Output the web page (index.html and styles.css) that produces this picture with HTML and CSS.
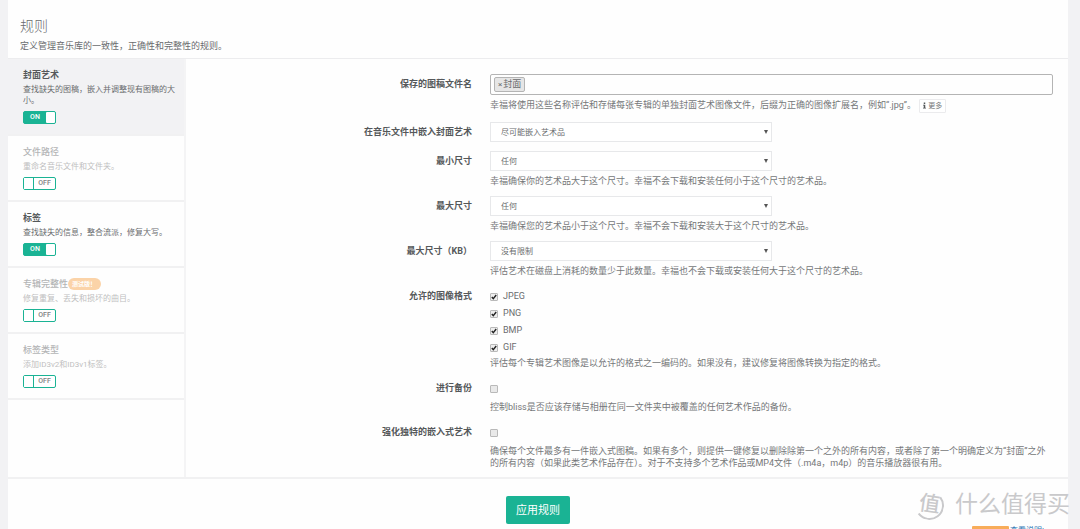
FILE: index.html
```html
<!DOCTYPE html>
<html lang="zh-CN">
<head>
<meta charset="utf-8">
<title>规则</title>
<link rel="stylesheet" href="styles.css">
</head>
<body>
<main class="card">
  <header class="card-header">
    <h1>规则</h1>
    <p>定义管理音乐库的一致性，正确性和完整性的规则。</p>
  </header>
  <div class="card-body">
    <nav class="rules">
      <section class="rule rule-active">
        <h2>封面艺术</h2>
        <p>查找缺失的图稿，嵌入并调整现有图稿的大小。</p>
        <button type="button" class="switch switch-on" role="switch" aria-checked="true" aria-label="封面艺术"><span class="switch-text">ON</span><span class="knob"></span></button>
      </section>
      <section class="rule rule-off">
        <h2>文件路径</h2>
        <p>重命名音乐文件和文件夹。</p>
        <button type="button" class="switch" role="switch" aria-checked="false" aria-label="文件路径"><span class="knob"></span><span class="switch-text">OFF</span></button>
      </section>
      <section class="rule">
        <h2>标签</h2>
        <p>查找缺失的信息，整合流派，修复大写。</p>
        <button type="button" class="switch switch-on" role="switch" aria-checked="true" aria-label="标签"><span class="switch-text">ON</span><span class="knob"></span></button>
      </section>
      <section class="rule rule-off">
        <h2>专辑完整性<span class="badge">测试版！</span></h2>
        <p>修复重复、丢失和损坏的曲目。</p>
        <button type="button" class="switch" role="switch" aria-checked="false" aria-label="专辑完整性"><span class="knob"></span><span class="switch-text">OFF</span></button>
      </section>
      <section class="rule rule-off">
        <h2>标签类型</h2>
        <p>添加ID3v2和ID3v1标签。</p>
        <button type="button" class="switch" role="switch" aria-checked="false" aria-label="标签类型"><span class="knob"></span><span class="switch-text">OFF</span></button>
      </section>
    </nav>
    <form class="settings" id="settings">
      <div class="row">
        <label class="name" for="filenames">保存的图稿文件名</label>
        <div class="field">
          <div class="tags">
            <span class="tag"><button type="button" class="tag-remove" aria-label="移除">×</button>封面</span>
            <input type="text" class="tag-input" id="filenames">
          </div>
          <p class="help help-more">幸福将使用这些名称评估和存储每张专辑的单独封面艺术图像文件，后缀为正确的图像扩展名，例如“.jpg”。 <button type="button" class="more"><svg viewBox="0 0 4 8" class="info" aria-hidden="true"><path d="M1 0h2v2H1zM0 3h3v4h1v1H0V7h1V4H0z"/></svg>更多</button></p>
        </div>
      </div>
      <div class="row">
        <label class="name" for="embed">在音乐文件中嵌入封面艺术</label>
        <div class="field">
          <div class="select"><select id="embed"><option>尽可能嵌入艺术品</option></select></div>
        </div>
      </div>
      <div class="row">
        <label class="name" for="min">最小尺寸</label>
        <div class="field">
          <div class="select"><select id="min"><option>任何</option></select></div>
          <p class="help">幸福确保你的艺术品大于这个尺寸。幸福不会下载和安装任何小于这个尺寸的艺术品。</p>
        </div>
      </div>
      <div class="row">
        <label class="name" for="max">最大尺寸</label>
        <div class="field">
          <div class="select"><select id="max"><option>任何</option></select></div>
          <p class="help">幸福确保您的艺术品小于这个尺寸。幸福不会下载和安装大于这个尺寸的艺术品。</p>
        </div>
      </div>
      <div class="row">
        <label class="name" for="maxkb">最大尺寸（KB）</label>
        <div class="field">
          <div class="select"><select id="maxkb"><option>没有限制</option></select></div>
          <p class="help">评估艺术在磁盘上消耗的数量少于此数量。幸福也不会下载或安装任何大于这个尺寸的艺术品。</p>
        </div>
      </div>
      <div class="row" role="group" aria-labelledby="formats">
        <span class="name" id="formats">允许的图像格式</span>
        <div class="field field-checks">
          <label class="check"><input type="checkbox" checked>JPEG</label>
          <label class="check"><input type="checkbox" checked>PNG</label>
          <label class="check"><input type="checkbox" checked>BMP</label>
          <label class="check"><input type="checkbox" checked>GIF</label>
          <p class="help help-tight">评估每个专辑艺术图像是以允许的格式之一编码的。如果没有，建议修复将图像转换为指定的格式。</p>
        </div>
      </div>
      <div class="row">
        <label class="name" for="backup">进行备份</label>
        <div class="field field-checks">
          <div class="check"><input type="checkbox" id="backup"></div>
          <p class="help">控制bliss是否应该存储与相册在同一文件夹中被覆盖的任何艺术作品的备份。</p>
        </div>
      </div>
      <div class="row">
        <label class="name" for="unique">强化独特的嵌入式艺术</label>
        <div class="field field-checks">
          <div class="check"><input type="checkbox" id="unique"></div>
          <p class="help">确保每个文件最多有一件嵌入式图稿。如果有多个，则提供一键修复以删除除第一个之外的所有内容，或者除了第一个明确定义为“封面”之外的所有内容（如果此类艺术作品存在）。对于不支持多个艺术作品或MP4文件（.m4a，m4p）的音乐播放器很有用。</p>
        </div>
      </div>
    </form>
  </div>
  <footer class="card-footer">
    <button type="submit" form="settings" class="apply">应用规则</button>
  </footer>
</main>
<div class="peek"><span class="peek-chip"></span><a href="#">查看说明!</a></div>
<div class="watermark">
  <span class="seal">值</span><span>什么值得买</span>
</div>
</body>
</html>
```

FILE: styles.css
```css
* { box-sizing: border-box; }

body {
  position: relative;
  min-height: 100vh;
  margin: 0;
  padding: 0 12px 0 8px;
  overflow: hidden;
  display: flex;
  flex-direction: column;
  background: #f2f2f4;
  color: #6a6c6e;
  font: 9px/13px Roboto, "Noto Sans CJK SC", sans-serif;
}

h1, h2, p { margin: 0; }
button, input, select { font: inherit; color: inherit; }

.card {
  flex: 1;
  background: #fefefe;
}

.card-header {
  padding: 16px 12px 5px;
  border-bottom: 1px solid #ececee;
}
.card-header h1 {
  font-size: 14px;
  line-height: 20px;
  font-weight: 300;
  margin-bottom: 4px;
}

.card-body {
  display: flex;
  border-bottom: 2px solid #f1f1f2;
}

.rules {
  flex: 0 0 178px;
  border-right: 2px solid #f4f4f5;
}
.rule {
  padding: 10px 8px 10px 15px;
  border-bottom: 2px solid #f1f1f2;
}
.rule h2 {
  display: flex;
  align-items: center;
  font-size: 9px;
  line-height: 12px;
  height: 12px;
  font-weight: 700;
  color: #55585a;
}
.rule p {
  margin: 3px 0 5px;
  font-size: 8px;
  line-height: 11px;
}
.rule-active { background: #f2f2f4; }
.rule-off h2 { font-weight: 500; color: #b4b5b6; }
.rule-off p { color: #bebfc0; }

.badge {
  padding: 0 5px 0 4px;
  border-radius: 6px;
  background: #fbd3a8;
  color: #fff;
  font-size: 6px;
  line-height: 12px;
  font-weight: 700;
}

.switch {
  display: flex;
  width: 33px;
  height: 13px;
  padding: 0;
  border: 1px solid #1ab394;
  border-radius: 2px;
  background: #fff;
  font-size: 7px;
  line-height: 11px;
  font-weight: 500;
  color: #808284;
}
.switch-text { flex: 1; text-align: center; }
.knob {
  width: 10px;
  height: 11px;
  background: #fff;
  border-right: 1px solid #1ab394;
}
.switch-on { background: #1ab394; color: #fff; }
.switch-on .knob { width: 9px; border-right: 0; border-radius: 1px; }

.settings {
  flex: 1;
  display: flex;
  flex-direction: column;
  gap: 9px;
  padding: 15px 15px 8px 0;
}
.row {
  display: grid;
  grid-template-columns: minmax(0, 286fr) minmax(0, 563fr);
  column-gap: 18px;
}
.name {
  line-height: 21px;
  height: 20px;
  text-align: right;
  font-weight: 700;
  color: #55585a;
}
.help { margin-top: 4px; line-height: 12px; color: #757779; }
.help-more { margin-top: 2px; line-height: 16px; }
.help-tight { margin-top: 1px; }

.tags {
  display: flex;
  align-items: center;
  height: 21px;
  padding: 0 3px;
  border: 1px solid #b4b4b4;
  border-radius: 2px;
}
.tag {
  display: flex;
  align-items: center;
  height: 15px;
  padding: 0 3px;
  border: 1px solid #b4b4b4;
  border-radius: 2px;
  background: #e6e6e6;
}
.tag-remove {
  padding: 0 1px 0 0;
  border: 0;
  background: none;
  font-size: 8px;
  line-height: 12px;
}
.tag-input {
  flex: 1;
  min-width: 0;
  border: 0;
  outline: 0;
  background: none;
}

.more {
  display: inline-flex;
  align-items: center;
  gap: 2px;
  height: 14px;
  margin-left: 1px;
  padding: 0 3px;
  border: 1px solid #ebebed;
  border-radius: 1px;
  background: #fff;
  font-size: 7px;
  line-height: 12px;
  vertical-align: middle;
}
.info { width: 3px; height: 7px; fill: #55585a; }

.select {
  position: relative;
  width: 50%;
  height: 20px;
}
.select select {
  display: block;
  width: 100%;
  height: 100%;
  padding: 0 10px;
  border: 1px solid #e7e8ea;
  border-radius: 0;
  appearance: none;
  background: #fff;
  font-size: 8px;
}
.select::after {
  content: "";
  position: absolute;
  top: 8px;
  right: 4px;
  border: 2px solid transparent;
  border-top: 4px solid #555;
  border-bottom: 0;
  pointer-events: none;
}

.field-checks { padding-top: 2px; }
.check {
  display: flex;
  align-items: center;
  gap: 5px;
  height: 17px;
}
.check input {
  appearance: none;
  width: 8px;
  height: 8px;
  margin: 0;
  border: 1px solid #b9b9b9;
  border-radius: 1px;
  background: #e9e9e9;
}
.check input:checked {
  background: #eee url("data:image/svg+xml,%3Csvg xmlns='http://www.w3.org/2000/svg' viewBox='0 0 6 6'%3E%3Cpath d='M.8 3l1.5 1.7L5.2 1' fill='none' stroke='%23222' stroke-width='1.4'/%3E%3C/svg%3E") center / 100%;
}

.card-footer {
  display: flex;
  justify-content: center;
  padding: 17px 0 3px;
}
.apply {
  height: 28px;
  padding: 0 10px;
  border: 0;
  border-radius: 2px;
  background: #1ab394;
  color: #fff;
  font-size: 11px;
}

.peek {
  position: absolute;
  right: 36px;
  bottom: 0;
  display: flex;
  gap: 1px;
  height: 3px;
  overflow: hidden;
}
.peek-chip { width: 37px; background: #f8ac59; border-radius: 1px 1px 0 0; }
.peek a { color: #337ab7; font-size: 8px; line-height: 9px; text-decoration: none; }

.watermark {
  position: absolute;
  right: 10px;
  bottom: 9px;
  display: flex;
  align-items: center;
  gap: 11px;
  color: #c9c9cb;
  font-size: 23px;
  line-height: 30px;
  pointer-events: none;
}
.seal {
  width: 29px;
  height: 29px;
  border: 2px solid #c9c9cb;
  border-top-color: transparent;
  border-left-color: transparent;
  border-radius: 50%;
  font-size: 21px;
  font-weight: 500;
  line-height: 22px;
  text-align: center;
  transform: rotate(8deg);
}
```
